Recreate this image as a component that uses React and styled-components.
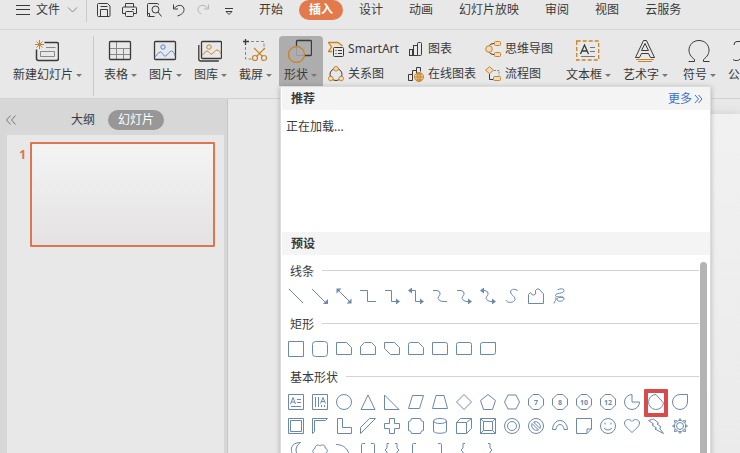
import React from "react";
import styled, { createGlobalStyle, css } from "styled-components";

const ink = "#3a3a3a";
const amber = "#c8842a";
const orange = "#e27a4c";
const steel = "#6c88aa";

const GlobalStyle = createGlobalStyle`
  * { box-sizing: border-box; }
  body { margin: 0; }
  body, button {
    font-family: "Noto Sans", "Noto Sans CJK SC", sans-serif;
    font-size: 12px;
    line-height: 18px;
    color: ${ink};
  }
  button { margin: 0; padding: 0; border: 0; background: none; white-space: nowrap; }
  svg { display: block; flex: none; fill: none; }
`;

const Page = styled.div`
  display: flex;
  flex-direction: column;
  height: 100vh;
  overflow: hidden;
  background: #e8e8e8;
`;

const TopBar = styled.header`
  display: flex;
  align-items: center;
  flex: none;
  height: 30px;
  padding-bottom: 10px;
  border-bottom: 1px solid #d6d6d6;
`;

const FileButton = styled.button`
  display: flex;
  align-items: center;
  gap: 6px;
  margin-left: 16px;
`;

const Divider = styled.span`
  flex: none;
  width: 1px;
  height: ${(p) => (p.$tall ? "60px" : "24px")};
  margin: ${(p) => (p.$tall ? "0 5px 0 4px" : "0 4px 0 8px")};
  background: #c9c9c9;
`;

const QuickButton = styled.button`
  display: grid;
  place-items: center;
  flex: none;
  width: 25px;
  height: 20px;
`;

const Tabs = styled.nav`
  display: flex;
  gap: 6px;
  margin-left: 8px;
`;

const Tab = styled.button`
  flex: none;
  height: 20px;
  padding: 0 10px;
  border-radius: 10px;
  ${(p) => p.$active && css`
    background: ${orange};
    color: #fff;
    font-weight: 700;
  `}
`;

const Ribbon = styled.div`
  display: flex;
  flex: none;
  height: 69px;
  padding: 6px 0 0 8px;
  border-bottom: 1px solid #d2d2d2;
`;

const RibbonGroup = styled.div`
  display: flex;
  flex: none;
  margin-right: 3px;
`;

const RibbonButton = styled.button`
  display: flex;
  flex-direction: column;
  align-items: center;
  gap: 3px;
  flex: none;
  height: 50px;
  margin-right: 1px;
  padding: 3px 7px 0 5px;
  border-radius: 4px 4px 0 0;
  background: ${(p) => (p.$active ? "#adadad" : "transparent")};
`;

const DropLabel = styled.span`
  display: flex;
  align-items: center;
  gap: 3px;
  &::after {
    content: "";
    width: 0;
    margin-right: -1px;
    border: 3px solid transparent;
    border-top-color: #777;
    border-bottom: 0;
  }
`;

const SmallGrid = styled.div`
  display: grid;
  grid-template: repeat(2, 25px) / auto auto auto;
  column-gap: 9px;
  flex: none;
  margin: 0 8px 0 4px;
`;

const SmallButton = styled.button`
  display: flex;
  align-items: center;
  gap: 4px;
`;

const MenuAnchor = styled.div`
  position: relative;
  flex: none;
`;

const Menu = styled.section`
  position: absolute;
  z-index: 2;
  top: 50px;
  left: 1px;
  width: 431px;
  border: 1px solid #dcdcdc;
  background: #fff;
  box-shadow: 0 1px 5px rgba(0, 0, 0, 0.25);
`;

const MenuHeader = styled.div`
  display: flex;
  justify-content: space-between;
  align-items: center;
  height: 23px;
  margin-left: 1px;
  padding: 0 7px 0 9px;
  background: #f4f4f4;
`;

const MenuTitle = styled.h2`
  margin: 0;
  font-size: 12px;
`;

const MoreLink = styled.a`
  display: flex;
  align-items: center;
  gap: 2px;
  color: #3f70c8;
  text-decoration: none;
`;

const Loading = styled.p`
  height: 122px;
  margin: 0;
  padding: 8px 5px;
`;

const Presets = styled.div`
  display: flex;
  padding-top: 7px;
`;

const Groups = styled.div`
  flex: 1;
`;

const ScrollThumb = styled.div`
  width: 7px;
  margin-right: 3px;
  margin-left: 1px;
  border-radius: 4px;
  background: #b4b4b4;
`;

const Group = styled.section`
  padding-bottom: 7px;
`;

const GroupTitle = styled.h3`
  display: flex;
  align-items: center;
  gap: 8px;
  height: 20px;
  margin: 0 0 2px 9px;
  font-size: 12px;
  font-weight: 400;
  &::after {
    content: "";
    flex: 1;
    height: 1px;
    margin-bottom: 3px;
    background: #d3d3d3;
  }
`;

const ShapeGrid = styled.div`
  display: grid;
  grid-template-columns: repeat(17, 24px);
  margin-left: 3px;
`;

const ShapeButton = styled.button`
  position: relative;
  display: grid;
  place-items: center;
  height: 24px;
  ${(p) => p.$marked && css`
    &::after {
      content: "";
      position: absolute;
      inset: -1px 0 -3px;
      border: 4px solid #db4a4a;
      border-radius: 1px;
    }
  `}
`;

const Workspace = styled.div`
  display: flex;
  flex: 1;
  min-height: 0;
`;

const SidePanel = styled.aside`
  display: flex;
  flex-direction: column;
  flex: none;
  width: 228px;
  padding-right: 3px;
  border-right: 1px solid #c6c6c6;
  background: #d7d7d7;
`;

const PanelHeader = styled.div`
  display: flex;
  align-items: center;
  flex: none;
  height: 36px;
  padding-top: 6px;
`;

const CollapseButton = styled.button`
  display: grid;
  place-items: center;
  width: 22px;
  height: 20px;
`;

const PanelTabs = styled.div`
  display: flex;
  gap: 3px;
  margin-left: 39px;
`;

const PanelTab = styled.button`
  height: 20px;
  padding: 0 10px;
  border-radius: 10px;
  ${(p) => p.$active && css`
    background: #979797;
    color: #fff;
  `}
`;

const SlideList = styled.ol`
  flex: 1;
  margin: 0 0 0 7px;
  padding: 7px 9px 0 0;
  list-style: none;
  background: #e8e8e8;
`;

const SlideItem = styled.li`
  display: flex;
  gap: 4px;
`;

const SlideNumber = styled.span`
  width: 19px;
  padding-top: 4px;
  text-align: right;
  font-weight: 700;
  color: #dd7448;
`;

const SlideThumb = styled.button`
  flex: 1;
  height: 105px;
  border: 2px solid #dd7650;
  border-radius: 1px;
  background: linear-gradient(#f4f4f4, #e4e2e2);
`;

const Canvas = styled.main`
  display: flex;
  flex: 1;
  padding: 15px 0 0 68px;
`;

const SlidePage = styled.div`
  flex: 1;
  background: linear-gradient(#f1f1f1, #ebebeb);
  box-shadow: 0 0 10px rgba(0, 0, 0, 0.1);
`;

function Icon({ w = 24, h = 24, color = ink, children }) {
  return (
    <svg width={w} height={h} viewBox={`0 0 ${w} ${h}`} stroke={color} strokeWidth="1" aria-hidden="true">
      {children}
    </svg>
  );
}

const quickActions = [
  ["保存", <><path d="M1.500 2.500q0-1 1-1h9l2.500 2.500v9.500q0 1-1 1h-10.500q-1 0-1-1z" /><path d="M4.500 14v-6.500h7v6.500M4.500 4.500h7" /></>],
  ["打印", <><path d="M4.500 5v-3.500h8v3.500M4 11.500h-2.500v-5.500q0-1 1-1h12q1 0 1 1v5.500h-2.500" /><rect x="4.500" y="9.500" width="8" height="5" rx="1" /><path d="M11 7.500h2" /></>],
  ["打印预览", <><path d="M12.500 3v-.5q0-1-1-1h-9q-1 0-1 1v11q0 1 1 1h6M1.500 11.500h2v3" /><circle cx="9.500" cy="7.500" r="3.500" /><path d="M12 10l3.500 4.500" /></>],
  ["撤销", <><path d="M2.500 2.500v4.500h4.500" /><path d="M3 6.500c4-5 10-3.500 10 1 0 3-2 5-6.500 6.500" /></>],
  ["恢复", <g stroke="#b4b4b4"><path d="M12.500 2.500v4.500h-4.500" /><path d="M12 6.500c-4-5-10-3.500-10 1 0 3 2 4 3.500 4.500" /></g>],
  ["自定义快速访问工具栏", <><path d="M4 6.500h8M5 9.500l3 3 3-3z" /></>],
];

const tabs = ["开始", "插入", "设计", "动画", "幻灯片放映", "审阅", "视图", "云服务"];

const pictureLines = "M1.500 18c2 0 3-5 6-5 2 0 3 5 5 4s4-5 6-5 3 3 3.500 5";

const icons = {
  newSlide: <><path d="M9.500 3.500h12q2 0 2 2v14q0 2-2 2h-18q-2 0-2-2v-9" strokeWidth="1.500" /><path d="M11 8.500h9.500M5.500 12.500h14v5h-14z" stroke="#888" /><path d="M4.500 1v9M0 5.500h9M1.500 2.500l6 6M7.500 2.500l-6 6" stroke={amber} /></>,
  table: <><path d="M8.500 3v18M15.500 9v12M2 9.500h20M2 15.500h20" stroke="#888" /><rect x="1.500" y="2.500" width="21" height="18" rx="1" strokeWidth="1.300" /></>,
  picture: <><rect x="1.500" y="2.500" width="21" height="18" rx="1" strokeWidth="1.300" /><g stroke="#5686cf"><circle cx="10" cy="8" r="2.200" /><path d={pictureLines} /></g></>,
  gallery: <><path d="M.8 6v14q0 2 2 2h18" strokeWidth="1.300" /><rect x="3.500" y="2.500" width="20" height="17" rx="1" strokeWidth="1.300" /><g stroke={amber}><circle cx="11" cy="8" r="2.200" /><path d="M4 16c2 0 3-4 5-4s3 4 5 3 3-4 5-4 3 2 4 4" /></g></>,
  crop: <><path d="M2.500 0v6M0 2.500h6" strokeWidth="1.300" /><path d="M8 2.500h13v8M2.500 8v12h6" stroke="#888" strokeDasharray="3 2" /><g stroke={amber} strokeWidth="1.200"><circle cx="12" cy="19" r="2.500" /><circle cx="21" cy="19" r="2.500" /><path d="M11 9l8.500 8.500M22 9l-8.500 8.500" /></g></>,
  shapes: <><rect x="8.500" y="1.500" width="15" height="15" rx="1" strokeWidth="1.300" /><circle cx="8.500" cy="15.500" r="8" fill="#adadad" stroke={amber} strokeWidth="1.300" /><path d="M8.500 7v9.500h8" stroke="#8a8a8a" strokeOpacity=".5" /></>,
  textBox: <><rect x=".7" y="2" width="22" height="19" stroke={amber} strokeWidth="1.300" strokeDasharray="4 2" /><path d="M4.500 15l4-9 4 9M6 12h5" strokeWidth="1.300" /><path d="M14 8.500h5M14 12.500h5M5 17.500h14" stroke="#777" /></>,
  wordArt: <><path d="M2.500 18.500l8-17h3l8 17h-4l-2-4h-7l-2 4z" /><path d="M8.500 11.500l3.500-7 3.500 7z" /><path d="M3 20.500h18M5 22.500h14" stroke={amber} /></>,
  omega: <path d="M1.500 22.500h6v-2c-4-3-5.500-6-5.500-9.500 0-5 4-9.500 10-9.500s10 4.500 10 9.500c0 3.500-1.500 6.500-5.500 9.500v2h6" />,
  formula: <path d="M2 6q0-3.500 3-3.500h18M9.500 3v11q0 7-4 7.500-3 .5-4.500-1M17.500 3v14q0 5 5 4" />,
  smartArt: <><path d="M4.500 10.500h-4l3-4.500-3-5h9.500l5 4h-9.500v5.500z" fill="#f3e3cb" stroke="none" /><path d="M4 10.500h-3.500l3-4.500-3-4.500h9.500l4.500 3.500" stroke={amber} strokeWidth="1.300" /><rect x="5.500" y="6.500" width="10" height="9" rx="1" fill="#e8e8e8" /><path d="M7.500 9.500h1M10 9.500h4M7.500 12.500h1M10 12.500h4" /></>,
  chart: <><rect x="1.500" y="8.500" width="3" height="6" /><rect x="5.500" y="4.500" width="4" height="10" /><rect x="9.500" y="1.500" width="4" height="13" rx="1" /></>,
  mindMap: <><path d="M4 5q1-2.500 5-2.500M4 11q1 2.500 5 2.500" /><g stroke={amber} fill="#f0dcbc"><circle cx="4" cy="8" r="3.300" /><rect x="9.500" y=".5" width="6" height="4" rx="1" /><rect x="9.500" y="11.500" width="6" height="4" rx="1" /></g></>,
  relation: <><circle cx="8" cy="8.500" r="6" /><g stroke={amber} fill="#f0dcbc"><circle cx="8" cy="2.800" r="2.300" /><circle cx="2.800" cy="12.500" r="2.300" /><circle cx="13.200" cy="12.500" r="2.300" /></g></>,
  onlineChart: <><path d="M.5 14.500v-6h4v6zM4.500 14.500v-10h4v3M8.500 5v-3.500h4v4" /><g stroke={amber}><circle cx="11" cy="11" r="4.500" fill="#f0dcbc" /><path d="M6.500 11h9M11 6.500v9M8 8h6M8 14h6" /><ellipse cx="11" cy="11" rx="2" ry="4.500" /></g></>,
  flow: <><path d="M4.500 8v5.500h4" /><path d="M9 4.500h5v5" stroke="#888" strokeDasharray="2 1" /><g stroke={amber} fill="#f0dcbc"><path d="M4.500 .7l4 3.500-4 3.500-4-3.500z" /><rect x="8.500" y="10.500" width="7" height="4" rx="1" /></g></>,
};

const firstButtons = [["表格", "table"], ["图片", "picture"], ["图库", "gallery"], ["截屏", "crop"]];
const smallButtons = [
  ["SmartArt", "smartArt"], ["图表", "chart"], ["思维导图", "mindMap"],
  ["关系图", "relation"], ["在线图表", "onlineChart"], ["流程图", "flow"],
];
const textButtons = [["文本框", "textBox"], ["艺术字", "wordArt"]];
const symbolButtons = [["符号", "omega"], ["公式", "formula"]];

const P = (d) => <path d={d} />;
const withHeads = (line, heads) => <><path d={line} /><path d={heads} fill={steel} stroke="none" /></>;
const rightHead = "M12 10.500l4 3-4 3z";
const leftHead = "M4-.5l-4 3 4 3z";
const elbow = "M1 2.500h6.500v11h7.500";
const curve = "M1 2.500h4q4 1 3 4-1.500 2-2 4 1 3 5 3h4";
const octagon = (n) => (
  <>
    <path d="M5 .5h6l4.500 4.500v6l-4.500 4.500h-6l-4.500-4.500v-6z" />
    <text x="8" y="10.500" textAnchor="middle" fontSize="7" fontWeight="700" fill={steel} stroke="none">{n}</text>
  </>
);

const groups = [
  {
    title: "线条",
    shapes: [
      ["直线", P("M1 1l14 14")],
      ["箭头", withHeads("M0 1l14 14", "M16 16v-5l-5 5z")],
      ["双箭头", withHeads("M3 3l10 10", "M15.500 15.500v-5l-5 5zM.5 .5v5l5-5z")],
      ["肘形连接符", P("M0 2.500h7.500v11h8.500")],
      ["肘形箭头", withHeads(elbow, rightHead)],
      ["肘形双箭头", withHeads(elbow, rightHead + leftHead)],
      ["曲线连接符", P(curve)],
      ["曲线箭头", withHeads(curve, rightHead)],
      ["曲线双箭头", withHeads(curve, rightHead + leftHead)],
      ["曲线", P("M13.500 3c-1-2.500-7-2.500-7 1 0 3 5 4 4.500 7.500-.5 3.500-8 4-9 .5")],
      ["任意多边形", P("M.5 15.500v-9l2-2q1 3 3.500 2.500 2.500-.5 1.500-3-1-1.500 1.500-3h2l4.500 5v9.500z")],
      ["自由曲线", P("M5.500 2c3-2 7-1.500 6.500 1-.5 3-8.500 1.500-8.500 4.500 0 3 8.500-.5 8.500 3 0 3.500-7 3.500-7 1s5-2.500 6.500-1.500M3 10c3 0 0 2-1 5.500")],
    ],
  },
  {
    title: "矩形",
    shapes: [
      ["矩形", P("M.5 .5h15v15h-15z")],
      ["圆角矩形", <rect x=".5" y=".5" width="15" height="15" rx="3" />],
      ["剪去单角", P("M.5 1.500h10l5 5v7h-15z")],
      ["剪去同侧角", P("M4.500 1.500h7l4 4v8h-15v-8z")],
      ["剪去对角", P("M.5 1.500h10l5 5v7h-9l-6-6z")],
      ["剪去并圆角", P("M2.500 1.500h8l5 5v7h-15v-10q0-2 2-2z")],
      ["单圆角", P("M.5 1.500h13q2 0 2 2v10h-15z")],
      ["同侧圆角", P("M2.500 1.500h11q2 0 2 2v10h-15v-10q0-2 2-2z")],
      ["对角圆角", P("M2.500 1.500h13v10q0 2-2 2h-13v-10q0-2 2-2z")],
    ],
  },
  {
    title: "基本形状",
    shapes: [
      ["文本框", P("M.5 .5h15v15h-15zM2.500 10l2.500-6.500 2.500 6.500M3 8h4M9 5.500h4M9 8.500h4M3 12.500h10")],
      ["竖排文本框", P("M.5 .5h15v15h-15zM3.500 3v10M6.500 3v10M8.500 9.500l2.500-6 2.500 6M9 7.500h4M9.500 11v2M12.500 11v2")],
      ["椭圆", <circle cx="8" cy="8" r="7.500" />],
      ["三角形", P("M8 1l7 14.500h-14z")],
      ["直角三角形", P("M.5 1l14.500 14.500h-14.500z")],
      ["平行四边形", P("M4.500 1.500h11l-4 13h-11z")],
      ["梯形", P("M4 1.500h8l3.500 13h-15z")],
      ["菱形", P("M8 .5l7.500 7.500-7.500 7.500-7.500-7.500z")],
      ["五边形", P("M8 .5l7.500 6-3 9h-9l-3-9z")],
      ["六边形", P("M4 1h8l3.500 7-3.500 7h-8l-3.500-7z")],
      ["七边形", octagon(7)],
      ["八边形", octagon(8)],
      ["十边形", octagon(10)],
      ["十二边形", octagon(12)],
      ["饼形", P("M8 .5v7.500h7.500a7.500 7.500 0 1 1-7.500-7.500z")],
      ["弦形", P("M8 .5l7.500 8.500a7.500 7.500 0 1 1-7.500-8.500z"), true],
      ["泪滴形", P("M15.500 .5v7.500a7.500 7.500 0 1 1-7.500-7.500z")],
      ["图文框", P("M.5 .5h15v15h-15zM2.500 2.500h11v11h-11z")],
      ["半闭框", P("M.5 .5h15l-2 2h-11v11l-2 2z")],
      ["L 形", P("M1.500 .5h5v9h9v6h-14z")],
      ["斜纹", P("M9.500 .5h6l-15 15v-6z")],
      ["十字形", P("M5.500 .5h5v5h5v5h-5v5h-5v-5h-5v-5h5z")],
      ["缺角矩形", P("M3.500 .5h9q0 3 3 3v9q-3 0-3 3h-9q0-3-3-3v-9q3 0 3-3z")],
      ["圆柱形", <><ellipse cx="8" cy="3" rx="6.500" ry="2.500" /><path d="M1.500 3v10c0 3 13 3 13 0v-10" /></>],
      ["立方体", P("M.5 4.500h10v11h-10zM.5 4.500l4-4h11l-5 4M15.500 .5v10l-5 5")],
      ["棱台", P("M.5 .5h15v15h-15zM3.500 3.500h9v9h-9zM.5 .5l3 3M15.500 .5l-3 3M.5 15.500l3-3M15.500 15.500l-3-3")],
      ["同心圆", <><circle cx="8" cy="8" r="7.500" /><circle cx="8" cy="8" r="4.500" /></>],
      ["禁止符", <><circle cx="8" cy="8" r="7.500" /><path d="M4 5.500l6.500 6.500a5 5 0 0 1-6.500-6.500zM5.500 4l6.500 6.500a5 5 0 0 0-6.500-6.500z" /></>],
      ["空心弧", P("M.5 11.500a7.500 9 0 0 1 15 0h-3.500a4 5 0 0 0-8 0z")],
      ["折角形", P("M.5 .5h15v10.500l-4.500 4.500h-10.500zM11 15.500v-4.500h4.500")],
      ["笑脸", <><circle cx="8" cy="8" r="7.500" /><path d="M5 4.500v2M11 4.500v2M4 10q4 4 8 0" /></>],
      ["心形", P("M8 14.500c-3-3-7.500-6-7.500-9.500s5-5 7.500-1.500c2.500-3.500 7.500-2 7.500 1.500s-4.500 6.500-7.500 9.500z")],
      ["闪电形", P("M5.500 1l5 4-1.500 1 4 3-1.500 1 4 5.500-8.500-4.500 1.500-1-4.500-3 1.500-1-5-3.500z")],
      ["太阳形", <><circle cx="8" cy="8" r="3.500" /><path d="M6.500 2.500l1.500-2 1.500 2zM6.500 13.500l1.500 2 1.500-2zM2.500 6.500l-2 1.500 2 1.500zM13.500 6.500l2 1.500-2 1.500zM2.500 2.500l3 .5-2.500 2.500zM13.500 2.500l-.5 3-2.500-2.500zM2.500 13.500l.5-3 2.500 2.500zM13.500 13.500l-3-.5 2.500-2.500z" /></>],
      ["新月形", P("M12.500 .5c-7 0-10 4-9 9 1 4 4 6 9 6-6-4-6-11 0-15z")],
      ["云形", P("M4 12c-4 0-4-5-1-5.500 0-4 4-4 5-2.500 2-2 6-1 5 2 3 .5 3 5 0 5.500-2 3-7 3-9 .5z")],
      ["弧形", P("M0 2.500c8 0 13 5 13.500 13")],
      ["双括号", P("M5 1.500h-2.500q-1 0-1 1v12q0 1 1 1h2.500M11 1.500h2.500q1 0 1 1v12q0 1-1 1h-2.500")],
      ["双大括号", P("M5 1.500h-2v4.500l-2 2 2 2v5h2M11 1.500h2v4.500l2 2-2 2v5h-2")],
      ["左中括号", P("M8 1.500h-2.500q-1 0-1 1v12q0 1 1 1h2.500")],
      ["右中括号", P("M6 1.500h2.500q1 0 1 1v12q0 1-1 1h-2.500")],
      ["左大括号", P("M9 1.500h-2v4.500l-2 2 2 2v5h2")],
      ["右大括号", P("M8 1.500h2v4.500l2 2-2 2v5h-2")],
    ],
  },
];

function ToolButton({ label, icon, active }) {
  return (
    <RibbonButton $active={active} aria-expanded={active}>
      <Icon>{icons[icon]}</Icon>
      <DropLabel>{label}</DropLabel>
    </RibbonButton>
  );
}

function ToolButtons({ items }) {
  return items.map(([label, icon]) => <ToolButton key={label} label={label} icon={icon} />);
}

function ShapesMenu() {
  return (
    <Menu aria-label="形状">
      <MenuHeader>
        <MenuTitle>推荐</MenuTitle>
        <MoreLink href="#more">
          更多
          <Icon w={9} h={10} color="#3f70c8"><path d="M1 1l3.500 4-3.500 4M4.500 1l3.500 4-3.500 4" /></Icon>
        </MoreLink>
      </MenuHeader>
      <Loading>正在加载...</Loading>
      <MenuHeader>
        <MenuTitle>预设</MenuTitle>
      </MenuHeader>
      <Presets>
        <Groups>
          {groups.map((g) => (
            <Group key={g.title}>
              <GroupTitle>{g.title}</GroupTitle>
              <ShapeGrid>
                {g.shapes.map(([name, art, marked]) => (
                  <ShapeButton key={name} aria-label={name} $marked={marked}>
                    <Icon w={16} h={16} color={steel}>{art}</Icon>
                  </ShapeButton>
                ))}
              </ShapeGrid>
            </Group>
          ))}
        </Groups>
        <ScrollThumb />
      </Presets>
    </Menu>
  );
}

export default function App() {
  return (
    <Page>
      <GlobalStyle />
      <TopBar>
        <FileButton>
          <Icon w={14} h={12}><path d="M0 1.500h14M0 5.500h14M0 10.500h14" /></Icon>
          文件
          <Icon w={12} h={8} color="#888"><path d="M2 1.500l4.500 4.500 4.500-4.500" /></Icon>
        </FileButton>
        <Divider />
        {quickActions.map(([name, art]) => (
          <QuickButton key={name} aria-label={name}>
            <Icon w={16} h={16}>{art}</Icon>
          </QuickButton>
        ))}
        <Tabs>
          {tabs.map((t) => <Tab key={t} $active={t === "插入"}>{t}</Tab>)}
        </Tabs>
      </TopBar>
      <Ribbon>
        <ToolButton label="新建幻灯片" icon="newSlide" />
        <Divider $tall />
        <ToolButtons items={firstButtons} />
        <MenuAnchor>
          <ToolButton label="形状" icon="shapes" active />
          <ShapesMenu />
        </MenuAnchor>
        <SmallGrid>
          {smallButtons.map(([label, icon]) => (
            <SmallButton key={label}>
              <Icon w={16} h={16}>{icons[icon]}</Icon>
              {label}
            </SmallButton>
          ))}
        </SmallGrid>
        <RibbonGroup>
          <ToolButtons items={textButtons} />
        </RibbonGroup>
        <RibbonGroup>
          <ToolButtons items={symbolButtons} />
        </RibbonGroup>
      </Ribbon>
      <Workspace>
        <SidePanel>
          <PanelHeader>
            <CollapseButton aria-label="收起">
              <Icon w={12} h={10} color="#777"><path d="M5.500 .5l-4 4.500 4 4.500M10.500 .5l-4 4.500 4 4.500" /></Icon>
            </CollapseButton>
            <PanelTabs>
              <PanelTab>大纲</PanelTab>
              <PanelTab $active>幻灯片</PanelTab>
            </PanelTabs>
          </PanelHeader>
          <SlideList>
            <SlideItem>
              <SlideNumber>1</SlideNumber>
              <SlideThumb aria-label="幻灯片 1" />
            </SlideItem>
          </SlideList>
        </SidePanel>
        <Canvas>
          <SlidePage />
        </Canvas>
      </Workspace>
    </Page>
  );
}
